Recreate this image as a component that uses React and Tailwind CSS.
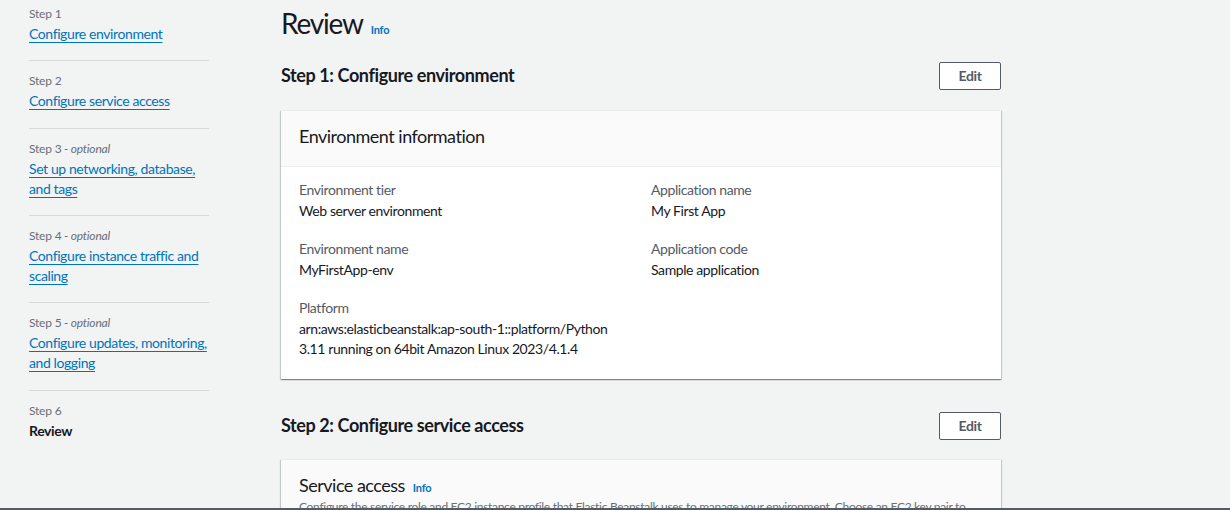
import React from "react";

const steps = [
  { label: "Step 1", opt: false, link: ["Configure environment"], cls: "pt-[4px] pb-[16px]" },
  { label: "Step 2", opt: false, link: ["Configure service access"], cls: "pt-[10px] pb-[17px]" },
  { label: "Step 3", opt: true, link: ["Set up networking, database,", "and tags"], cls: "pt-[10px] pb-[16px]" },
  { label: "Step 4", opt: true, link: ["Configure instance traffic and", "scaling"], cls: "pt-[10px] pb-[16px]" },
  { label: "Step 5", opt: true, link: ["Configure updates, monitoring,", "and logging"], cls: "pt-[10px] pb-[17px]" },
];

function Field({ label, children }) {
  return (
    <div className="flex flex-col">
      <div className="text-[14px] leading-[20px] text-[#545b64] mb-[1px]">{label}</div>
      <div className="text-[14px] leading-[20px] text-[#16191f] whitespace-nowrap">{children}</div>
    </div>
  );
}

function EditButton() {
  return (
    <button className="h-[28px] w-[62px] border border-[#545b64] rounded-[2px] bg-white text-[14px] font-bold text-[#545b64] leading-none">
      Edit
    </button>
  );
}

const cardShadow =
  "bg-white shadow-[0_1px_1px_0_rgba(0,28,36,0.3),1px_1px_1px_0_rgba(0,28,36,0.15),-1px_1px_1px_0_rgba(0,28,36,0.15)]";

export default function App() {
  return (
    <div
      className="h-[510px] w-full flex flex-col bg-[#f2f3f3] overflow-hidden tracking-[-0.4px]"
      style={{ fontFamily: 'Lato, "Noto Sans", Arial, sans-serif' }}
    >
      <div className="flex-1 flex overflow-hidden">
        <nav className="w-[209px] pl-[29px] shrink-0">
          {steps.map((s, i) => (
            <div key={i} className={`border-b border-[#d5dbdb] ${s.cls}`}>
              <div className="text-[12px] leading-[20px] text-[#687078] tracking-[-0.2px]">
                {s.label}
                {s.opt && <span className="italic"> - optional</span>}
              </div>
              <div className="text-[14px] leading-[20px] text-[#0073bb] whitespace-nowrap">
                {s.link.map((l, j) => (
                  <div key={j}>
                    <span className="underline underline-offset-[3px]">{l}</span>
                  </div>
                ))}
              </div>
            </div>
          ))}
          <div className="pt-[10px]">
            <div className="text-[12px] leading-[20px] text-[#687078] tracking-[-0.2px]">Step 6</div>
            <div className="text-[14px] leading-[20px] font-bold text-[#16191f]">Review</div>
          </div>
        </nav>

        <main className="ml-[72px] w-[720px] shrink-0 pt-[6px]">
          <div className="flex items-baseline gap-[8px]">
            <h1 className="text-[28px] leading-[34px] text-[#16191f] font-normal tracking-[-1.2px]">Review</h1>
            <span className="text-[11px] font-bold text-[#0073bb] tracking-[-0.2px]">Info</span>
          </div>

          <div className="mt-[22px] flex items-center justify-between">
            <h2 className="text-[18px] font-bold text-[#16191f] leading-[22px] mb-[3px]">Step 1: Configure environment</h2>
            <EditButton />
          </div>

          <section className={`mt-[20px] ${cardShadow}`}>
            <div className="bg-[#fafafa] border-b border-[#eaeded] px-[18px] pt-[14px] pb-[19px] border-t border-t-[#eaeded]">
              <h3 className="text-[18px] leading-[22px] text-[#16191f] font-normal tracking-[-0.5px]">Environment information</h3>
            </div>
            <div className="px-[18px] pt-[13px] pb-[20px] grid grid-cols-2 gap-x-[20px]">
              <div className="flex flex-col gap-[18px]">
                <Field label="Environment tier">Web server environment</Field>
                <Field label="Environment name">MyFirstApp-env</Field>
                <Field label="Platform">
                  arn:aws:elasticbeanstalk:ap-south-1::platform/Python
                  <br />
                  3.11 running on 64bit Amazon Linux 2023/4.1.4
                </Field>
              </div>
              <div className="flex flex-col gap-[18px]">
                <Field label="Application name">My First App</Field>
                <Field label="Application code">Sample application</Field>
              </div>
            </div>
          </section>

          <div className="mt-[33px] flex items-center justify-between">
            <h2 className="text-[18px] font-bold text-[#16191f] leading-[22px] mb-[2px]">Step 2: Configure service access</h2>
            <EditButton />
          </div>

          <section className={`mt-[19px] ${cardShadow}`}>
            <div className="bg-[#fafafa] border-t border-[#eaeded] px-[18px] pt-[14px] pb-[18px]">
              <div className="flex items-baseline gap-[8px]">
                <h3 className="text-[18px] leading-[22px] text-[#16191f] font-normal tracking-[-0.5px]">Service access</h3>
                <span className="text-[11px] font-bold text-[#0073bb] tracking-[-0.2px]">Info</span>
              </div>
              <p className="text-[12px] leading-[16px] text-[#687078] mt-[2px] whitespace-nowrap overflow-hidden tracking-[-0.3px]">
                Configure the service role and EC2 instance profile that Elastic Beanstalk uses to manage your environment. Choose an EC2 key pair to
              </p>
            </div>
          </section>
        </main>
      </div>
      <div className="h-[2px] bg-[#545b64] shrink-0" />
    </div>
  );
}
